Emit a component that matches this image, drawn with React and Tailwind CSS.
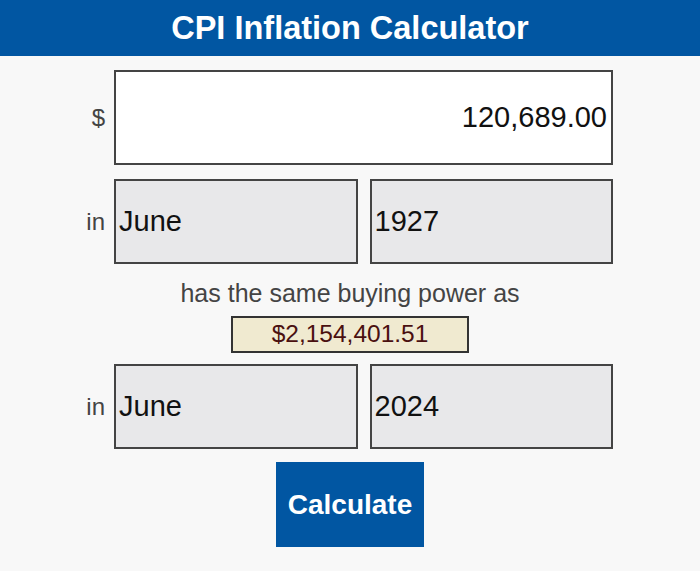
import React from 'react';

const font = { fontFamily: '"Liberation Sans", Arial, sans-serif' };

const Row = ({ label, children, className = '' }) => (
  <div className={`flex items-center ${className}`}>
    <div className="w-[105px] text-right text-[24px] text-[#444]">{label}</div>
    <div className="ml-[9px] w-[499px] flex gap-[12px]">{children}</div>
  </div>
);

const Box = ({ children }) => (
  <div className="flex-1 h-[85px] border-2 border-[#444] bg-[#e8e8ea] flex items-center pl-[3px] text-[29px] text-[#111]">
    {children}
  </div>
);

export default function App() {
  return (
    <div className="min-h-[571px] bg-[#f8f8f8]" style={font}>
      {/* Header */}
      <div className="h-[56px] bg-[#0156a2] flex items-center justify-center">
        <h1 className="text-[32.5px] font-bold text-white leading-none">CPI Inflation Calculator</h1>
      </div>

      <Row label="$" className="mt-[14px]">
        <div className="flex-1 h-[95px] border-2 border-[#444] bg-white flex items-center justify-end pr-[4px] text-[29px] text-[#111]">
          120,689.00
        </div>
      </Row>

      <Row label="in" className="mt-[14px]">
        <Box>June</Box>
        <Box>1927</Box>
      </Row>

      <p className="mt-[15px] text-center text-[25px] leading-[28px] text-[#444]">has the same buying power as</p>

      <div className="mt-[9px] flex justify-center">
        <div className="w-[238px] h-[37px] border-2 border-[#333] bg-[#f0ead0] flex items-center justify-center text-[24.5px] text-[#4a1010]">
          $2,154,401.51
        </div>
      </div>

      <Row label="in" className="mt-[11px]">
        <Box>June</Box>
        <Box>2024</Box>
      </Row>

      <div className="mt-[13px] flex justify-center">
        <button className="w-[148px] h-[85px] bg-[#0156a2] text-white text-[28px] font-bold">Calculate</button>
      </div>
    </div>
  );
}
